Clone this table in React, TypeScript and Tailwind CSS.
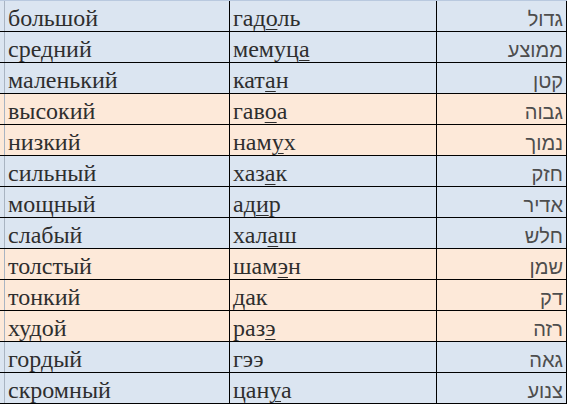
import React from "react";

type Row = { ru: string; tr: [string, string, string]; he: string; c: "b" | "o" };

const rows: Row[] = [
  { ru: "большой", tr: ["гад", "о", "ль"], he: "גדול", c: "b" },
  { ru: "средний", tr: ["мемуц", "а", ""], he: "ממוצע", c: "b" },
  { ru: "маленький", tr: ["кат", "а", "н"], he: "קטן", c: "b" },
  { ru: "высокий", tr: ["гав", "о", "а"], he: "גבוה", c: "o" },
  { ru: "низкий", tr: ["нам", "у", "х"], he: "נמוך", c: "o" },
  { ru: "сильный", tr: ["хаз", "а", "к"], he: "חזק", c: "b" },
  { ru: "мощный", tr: ["ад", "и", "р"], he: "אדיר", c: "b" },
  { ru: "слабый", tr: ["хал", "а", "ш"], he: "חלש", c: "b" },
  { ru: "толстый", tr: ["шам", "э", "н"], he: "שמן", c: "o" },
  { ru: "тонкий", tr: ["дак", "", ""], he: "דק", c: "o" },
  { ru: "худой", tr: ["раз", "э", ""], he: "רזה", c: "o" },
  { ru: "гордый", tr: ["гээ", "", ""], he: "גאה", c: "b" },
  { ru: "скромный", tr: ["цан", "у", "а"], he: "צנוע", c: "b" },
];

export default function App() {
  return (
    <div className="w-[567px] h-[405px] bg-white overflow-hidden font-['Liberation_Serif',serif]">
      <div className="h-px bg-[#b9c9df]" />
      {rows.map((r, i) => (
        <div
          key={i}
          className={`flex h-[31px] border-b border-black ${r.c === "b" ? "bg-[#dbe5f1]" : "bg-[#fde9d9]"}`}
        >
          <div className="w-[4px] shrink-0" />
          <div className="w-px shrink-0 bg-[#a9b4c2]" />
          <div className="w-[224px] shrink-0 pl-[3px] pt-[2px] text-[24px] leading-[30px] text-[#2e2e2e] whitespace-nowrap">
            {r.ru}
          </div>
          <div className="w-px shrink-0 bg-black" />
          <div className="w-[206px] shrink-0 pl-[3px] pt-[2px] text-[24px] leading-[30px] text-[#2e2e2e] whitespace-nowrap">
            {r.tr[0]}
            {r.tr[1] && (
              <span className="underline decoration-1 underline-offset-[3px]">{r.tr[1]}</span>
            )}
            {r.tr[2]}
          </div>
          <div className="w-px shrink-0 bg-black" />
          <div
            dir="rtl"
            className="w-[129px] shrink-0 pr-[3px] pt-[3px] text-right text-[20px] leading-[30px] text-[#4d4d4d] whitespace-nowrap font-['Liberation_Sans',sans-serif]"
          >
            {r.he}
          </div>
          <div className="w-px shrink-0 bg-black" />
        </div>
      ))}
    </div>
  );
}
